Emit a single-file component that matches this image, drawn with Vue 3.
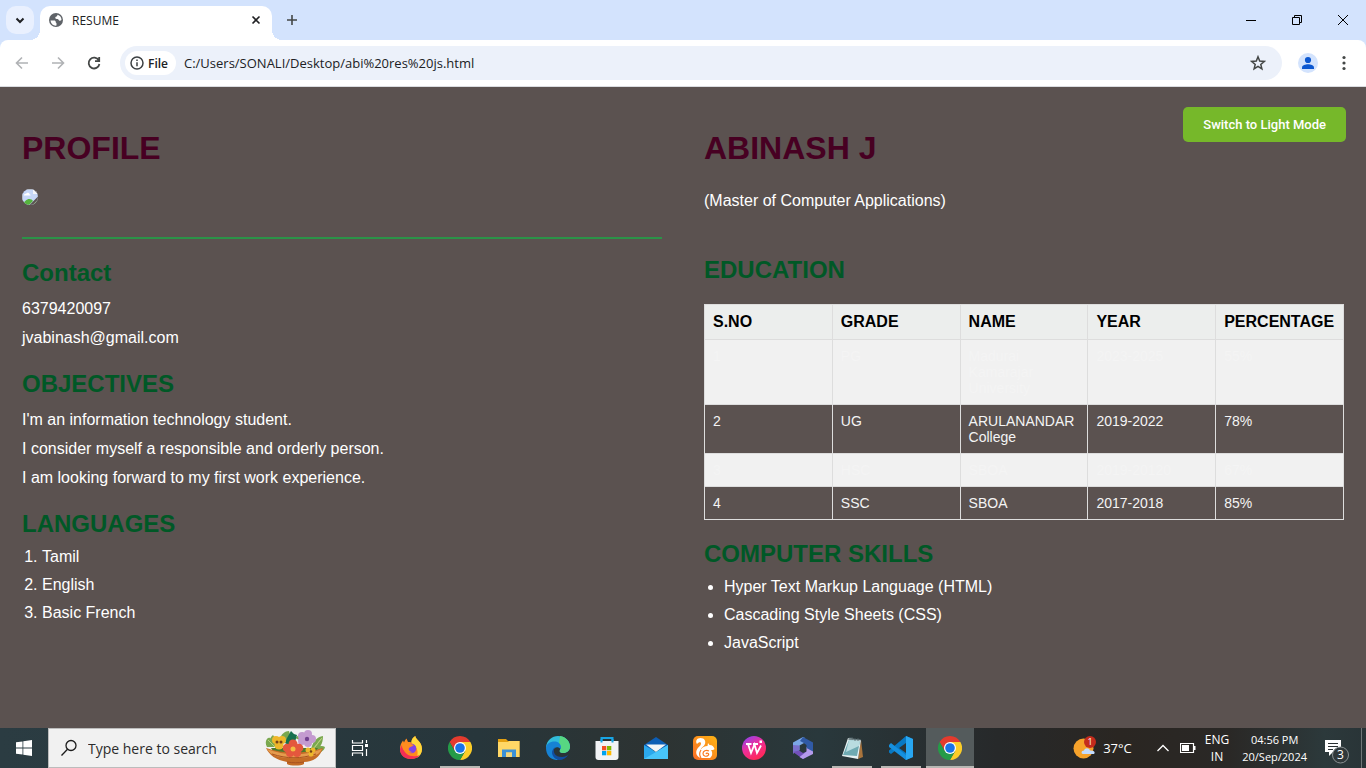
<script setup>
import { ref } from 'vue'

const url = ref('C:/Users/SONALI/Desktop/abi%20res%20js.html')
const columns = ['S.NO', 'GRADE', 'NAME', 'YEAR', 'PERCENTAGE']
const education = [
  ['1', 'PG', 'Madurai Kamarajar University', '2023-2025', '55%'],
  ['2', 'UG', 'ARULANANDAR College', '2019-2022', '78%'],
  ['3', 'HSC', 'SBOA', '2019-20120', '67%'],
  ['4', 'SSC', 'SBOA', '2017-2018', '85%'],
]
const objectives = [
  "I'm an information technology student.",
  'I consider myself a responsible and orderly person.',
  'I am looking forward to my first work experience.',
]
const languages = ['Tamil', 'English', 'Basic French']
const skills = ['Hyper Text Markup Language (HTML)', 'Cascading Style Sheets (CSS)', 'JavaScript']
const apps = [
  { id: 'firefox', name: 'Firefox' },
  { id: 'chrome', name: 'Chrome', open: true },
  { id: 'explorer', name: 'File Explorer' },
  { id: 'edge', name: 'Edge' },
  { id: 'store', name: 'Store' },
  { id: 'mail', name: 'Mail' },
  { id: 'uc', name: 'UC Browser' },
  { id: 'wps', name: 'WPS Office' },
  { id: 'm365', name: 'Microsoft 365' },
  { id: 'notepad', name: 'Notepad', open: true },
  { id: 'code', name: 'Visual Studio Code', open: true },
  { id: 'chrome', name: 'Chrome window', active: true },
]
</script>

<template>
  <div class="screen">
    <div class="browser">
      <header class="tabstrip">
        <button class="tab-search icon-btn" aria-label="Search tabs">
          <svg width="28" height="28" viewBox="0 0 28 28"><path d="M10.5 12.5l3.5 3.5 3.5-3.5" fill="none" stroke="#202124" stroke-width="2" /></svg>
        </button>
        <div class="tab">
          <svg width="16" height="16" viewBox="0 0 16 16">
            <circle cx="8" cy="8" r="7" fill="#5f6368" />
            <path d="M2.500 8.500h3.600c1.200 0 1.600.6 1.600 1.400 0 .7.8.6.8 1.500v2.200c-3.400.3-5.700-1.800-6-5.100zM9.500 2.700c2.400.5 4 2.500 4 5.300-.8.700-1.700.9-2.400.4-.8-.7-.5-1.500-1.500-1.500-1.200 0-2.300-.1-2.300-1.200 0-1.300 1.900-.7 2.200-3z" fill="#fff" />
          </svg>
          <span class="tab-title">RESUME</span>
          <button class="icon-btn" aria-label="Close tab">
            <svg width="16" height="16" viewBox="0 0 16 16"><path d="M4.500 4.500l7 7m0-7l-7 7" stroke="#202124" stroke-width="1.600" /></svg>
          </button>
        </div>
        <button class="new-tab icon-btn" aria-label="New tab">
          <svg width="20" height="20" viewBox="0 0 20 20"><path d="M10 5v10M5 10h10" stroke="#444746" stroke-width="1.600" /></svg>
        </button>
        <div class="window-controls">
          <button class="icon-btn" aria-label="Minimize"><svg width="12" height="12" viewBox="0 0 12 12"><path d="M1 6.500h10" stroke="#000" /></svg></button>
          <button class="icon-btn" aria-label="Restore"><svg width="12" height="12" viewBox="0 0 12 12"><path d="M1.500 3.500h7v7h-7zM3.500 3.500v-2h7v7h-2" fill="none" stroke="#000" /></svg></button>
          <button class="icon-btn" aria-label="Close"><svg width="12" height="12" viewBox="0 0 12 12"><path d="M1 1l10 10M11 1L1 11" stroke="#000" /></svg></button>
        </div>
      </header>

      <nav class="toolbar">
        <button class="icon-btn nav-btn" aria-label="Back">
          <svg width="16" height="16" viewBox="0 0 16 16"><path d="M14 8H3M8 2.500L2.500 8 8 13.500" fill="none" stroke="#b0b2b5" stroke-width="1.600" /></svg>
        </button>
        <button class="icon-btn nav-btn" aria-label="Forward">
          <svg width="16" height="16" viewBox="0 0 16 16"><path d="M2 8h11M8 2.500l5.500 5.500L8 13.500" fill="none" stroke="#b0b2b5" stroke-width="1.600" /></svg>
        </button>
        <button class="icon-btn reload" aria-label="Reload">
          <svg width="16" height="16" viewBox="0 0 16 16"><path d="M12.800 5.400A5.400 5.400 0 1 0 13.400 9M13.200 2v4.200H9" fill="none" stroke="#444746" stroke-width="1.800" /></svg>
        </button>
        <div class="address">
          <button class="file-chip">
            <svg width="14" height="14" viewBox="0 0 14 14"><circle cx="7" cy="7" r="6" fill="none" stroke="#3c4043" stroke-width="1.500" /><path d="M7 6.200v4M7 3.600v1.500" stroke="#3c4043" stroke-width="1.500" /></svg>
            File
          </button>
          <input v-model="url" class="url" type="text" aria-label="Address" />
          <button class="icon-btn" aria-label="Bookmark this page">
            <svg width="16" height="16" viewBox="0 0 16 16"><path d="M8 1.800l1.700 4.300 4.600.3-3.500 3 1.100 4.500L8 11.400l-3.900 2.500 1.100-4.500-3.500-3 4.600-.3z" fill="none" stroke="#444746" stroke-width="1.500" /></svg>
          </button>
        </div>
        <button class="icon-btn" aria-label="Profile">
          <svg width="20" height="20" viewBox="0 0 20 20"><circle cx="10" cy="10" r="10" fill="#d3e3fd" /><circle cx="10" cy="7" r="3.100" fill="#0b57d0" /><path d="M4 16v-1.500c0-2.200 3.500-3.200 6-3.200s6 1 6 3.200V16z" fill="#0b57d0" /></svg>
        </button>
        <button class="icon-btn menu-btn" aria-label="Menu">
          <svg width="16" height="16" viewBox="0 0 16 16" fill="#444746"><circle cx="8" cy="2.500" r="1.600" /><circle cx="8" cy="8" r="1.600" /><circle cx="8" cy="13.500" r="1.600" /></svg>
        </button>
      </nav>
    </div>

    <main class="page">
      <button class="mode">Switch to Light Mode</button>
      <section>
        <h1>PROFILE</h1>
        <svg width="16" height="16" viewBox="0 0 16 16" role="img" aria-label="Photo">
          <defs><clipPath id="round"><circle cx="8" cy="8" r="8" /></clipPath></defs>
          <g clip-path="url(#round)">
            <rect width="16" height="16" fill="#c6d7f8" />
            <path d="M.5 16V.5H11" fill="none" stroke="#b4bac4" />
            <path d="M2 6.500c0-1.500 1.200-2 2-1.500.6-2 3.500-1.500 3.500.2 1 0 1.200.8 1 1.300z" fill="#fff" />
            <path d="M1 16c1-3.500 3.500-6 6.500-6 1.500 0 2.800.8 3.500 2L7 16z" fill="#56b33d" />
            <path d="M11 0v5h5V0z" fill="#f4f6fa" /><path d="M11 0l5 5V0z" fill="#5b5250" />
            <path d="M16 7.500L7.500 16H16z" fill="#5b5250" />
            <path d="M16 10.500L10.500 16h2.500l3-3z" fill="#9cbf94" />
          </g>
        </svg>
        <hr />
        <h2>Contact</h2>
        <p>6379420097</p>
        <p>jvabinash@gmail.com</p>
        <h2>OBJECTIVES</h2>
        <p v-for="line in objectives" :key="line">{{ line }}</p>
        <h2>LANGUAGES</h2>
        <ol>
          <li v-for="item in languages" :key="item">{{ item }}</li>
        </ol>
      </section>
      <section>
        <h1>ABINASH J</h1>
        <p class="degree">(Master of Computer Applications)</p>
        <h2>EDUCATION</h2>
        <table>
          <thead>
            <tr><th v-for="c in columns" :key="c" scope="col">{{ c }}</th></tr>
          </thead>
          <tbody>
            <tr v-for="row in education" :key="row[0]"><td v-for="(cell, i) in row" :key="i">{{ cell }}</td></tr>
          </tbody>
        </table>
        <h2>COMPUTER SKILLS</h2>
        <ul>
          <li v-for="item in skills" :key="item">{{ item }}</li>
        </ul>
      </section>
    </main>

    <footer class="taskbar">
      <button class="start" aria-label="Start">
        <svg width="16" height="16" viewBox="0 0 16 16" fill="#fff"><path d="M0 2.300l6.500-.9v6.100H0zM7.300 1.300L16 0v7.500H7.300zM0 8.400h6.500v6.200L0 13.700zM7.300 8.400H16V16l-8.700-1.200z" /></svg>
      </button>
      <div class="search">
        <svg width="18" height="18" viewBox="0 0 18 18"><circle cx="11" cy="6.500" r="5" fill="none" stroke="#1c1c1c" stroke-width="1.300" /><path d="M7.500 10.200L1.500 16.500" stroke="#1c1c1c" stroke-width="1.300" /></svg>
        <input type="search" placeholder="Type here to search" aria-label="Type here to search" />
        <svg width="60" height="38" viewBox="0 0 60 38">
          <path d="M2 18C-1 13 2 8 5 9l7 9zM8 18c-4-5-4-9 0-12l8 12zM46 20c2-8 6-12 12-13 0 8-3 13-10 15zM50 20c3-3 7-4 10-2-1 5-6 6-11 6zM30 9l8-6 1 10zM15 10c1-5 5-8 9-8l4 13z" fill="#7aa84f" />
          <path d="M22 9l4-7 3 3 3 1-2 7-5 4-5-3z" fill="#17704e" />
          <path d="M3 11l9 9M57 9l-9 11M50 18l6-8" fill="none" stroke="#b4cf7c" />
          <path d="M6 19h47l-4 6H10z" fill="#4d7a2c" />
          <path d="M1 19c18 6 38 6 57 0-3 9-10 14-19 14v2c-3 2-14 2-17 0v-2C11 31 4 26 1 19z" fill="#c46c27" />
          <path d="M2 20c18 7 38 7 55 0-2 4-5 6-9 7-13 3-27 3-37 0-5-2-7-4-9-7z" fill="#e59b4d" />
          <path d="M7 25c15 5 29 5 44 0M22 33c6 1 11 1 17 0" fill="none" stroke="#a95220" />
          <g fill="#eeb72b"><circle cx="11" cy="11" r="4" /><circle cx="17" cy="11" r="4" /><circle cx="14" cy="16" r="4.500" /><circle cx="43" cy="21" r="2.500" /><circle cx="48" cy="21" r="2.500" /><circle cx="46" cy="25" r="2.500" /></g>
          <g fill="#744019"><circle cx="12" cy="13" r="1.500" /><circle cx="16" cy="13" r="1.500" /><circle cx="46" cy="22.500" r="1.200" /></g>
          <g fill="#c49bd0"><circle cx="37" cy="7" r="4" /><circle cx="43" cy="5" r="4" /><circle cx="47" cy="10" r="4" /><circle cx="43" cy="14" r="4" /><circle cx="37" cy="12" r="4" /></g><circle cx="42" cy="10" r="2.200" fill="#72418f" />
          <g fill="#e4573d"><circle cx="28" cy="15" r="4.500" /><circle cx="34" cy="19" r="4.300" /><circle cx="32" cy="24" r="4" /><circle cx="25" cy="24" r="4" /><circle cx="22" cy="19" r="4.300" /></g><circle cx="28" cy="20" r="2.500" fill="#f3bc42" />
        </svg>
      </div>
      <button class="task-view" aria-label="Task view">
        <svg width="18" height="18" viewBox="0 0 18 18"><path d="M1.500 1v3h10V1M1.500 17v-3h10v3M1.500 6.500h10v5h-10zM15.500 1v3M15.500 10v7" fill="none" stroke="#fff" stroke-width="1.200" /><path d="M14 5h3v3h-3z" fill="#fff" /></svg>
      </button>
      <div class="apps">
        <button v-for="app in apps" :key="app.name" :aria-label="app.name" :class="{ open: app.open, active: app.active }">
          <svg width="24" height="24" viewBox="0 0 24 24">
            <template v-if="app.id === 'firefox'">
              <path d="M12 23C6 23 1 18.800 1 13c0-3.500 1-5.800 3-8.500l1 2C6 4 6.500 3.500 7.500 2.500L9 6c1.500-.3 3 0 3.500.4C12.500 3 14.500 1 16.300 0c.2 3.500 6.700 5.500 6.700 13 0 5.500-5 10-11 10z" fill="#ff8a1f" />
              <path d="M16.300 0c.2 3.500 6.700 5.500 6.700 13 0 4-2 7-5 8.800 1-5 1-8.500-2-11.500-2-2-3-3-3.700-4C12.500 3 14.500 1 16.300 0z" fill="#ffd83b" />
              <path d="M1 13c0 6 4.400 10 11 10 4 0 7-1.500 8.800-4C15 21.500 5 21 3 9z" fill="#f62e55" />
              <circle cx="12.500" cy="12.500" r="4.800" fill="#8043e8" />
              <path d="M3 9c3-3 6-2 9-1l3 1c-2 2-4 1.500-5 3-1 2 1 4 4 4-5 2.500-11-1-11-7z" fill="#ff8d1f" />
            </template>
            <template v-else-if="app.id === 'chrome'">
              <path d="M12 0a12 12 0 0 1 10.400 6H12l-5.200 9L1.600 6A12 12 0 0 1 12 0z" fill="#e33b2e" />
              <path d="M22.400 6A12 12 0 0 1 12 24l5.200-9L12 6z" fill="#fccd28" />
              <path d="M1.600 6A12 12 0 0 0 12 24l5.200-9H6.800z" fill="#259b48" />
              <circle cx="12" cy="12" r="6" fill="#fff" /><circle cx="12" cy="12" r="4.800" fill="#1a73e8" />
            </template>
            <template v-else-if="app.id === 'explorer'">
              <path d="M1 3h8l2 2h11.500v16H1z" fill="#e4a011" /><path d="M1 6h10l1-1h10.500v16H1z" fill="#ffd766" />
              <path d="M5 21v-7.500h14V21h-4v-4.500H9V21z" fill="#3c91d6" /><path d="M9 16.500h6V21H9z" fill="#f3d67d" />
            </template>
            <template v-else-if="app.id === 'edge'">
              <path d="M0 11C1 4 6 0 12 0c7 0 12 5 12 10.500 0 4-3 6.500-7 6.500-3 0-4-1.500-3-3 2-3-1-7-5.500-7C4.500 7 1 9 0 13z" fill="#31bcda" />
              <path d="M14 0c6 1 10 5.500 10 10.500 0 4-3 6.500-7 6.500-3 0-4-1.500-3-3 1.500-2 1-4-1-6z" fill="#57d782" />
              <path d="M0 12c0-4 4-6.500 8.500-6.500 5 0 7.500 4 6 7.500C12 10 8 11 7 15c-1 4 2 8 6 8.900C5 25 0 19 0 12z" fill="#1682d4" />
              <path d="M9 11c-3 5 0 10 7 10 3 0 5-1 6.500-2.500C20.500 22 17 24 13 24c-6-1-10-8-4-13z" fill="#124d9f" />
            </template>
            <template v-else-if="app.id === 'store'">
              <path d="M6.500 7V2h11v5" fill="none" stroke="#18a5e5" stroke-width="2" /><path d="M.5 5h23v16q0 3-3 3h-17q-3 0-3-3z" fill="#f2f3f5" /><path d="M6.500 6.500V3M17.500 6.500V3" stroke="#18a5e5" stroke-width="2" />
              <path d="M7 10h4.300v4.300H7z" fill="#f25022" /><path d="M12 10h4.300v4.300H12z" fill="#7fba00" /><path d="M7 15h4.300v4.300H7z" fill="#00a4ef" /><path d="M12 15h4.300v4.300H12z" fill="#ffb900" />
            </template>
            <template v-else-if="app.id === 'mail'">
              <path d="M0 9L12 1l12 8v5H0z" fill="#0d5eb5" /><path d="M0 9l12 7 12-7v14H0z" fill="#2ba8ed" /><path d="M2 8.500h20L12 16z" fill="#f3f5f7" /><path d="M0 23L24 9v14z" fill="#48c5fa" />
            </template>
            <template v-else-if="app.id === 'uc'">
              <defs><linearGradient id="uc" x1="1" y1="0" x2="0" y2="1"><stop offset="0" stop-color="#fdb515" /><stop offset="1" stop-color="#fa6a25" /></linearGradient></defs>
              <rect width="24" height="24" rx="5" fill="url(#uc)" />
              <path d="M4 8C2 5 4 2 7.500 2c4 0 5.500 3 4.500 6-1 2.500-4 3.500-4.500 6 2-3 4-4 7-4l.5-3 1.500 2c3 0 4 1.500 5 4-1 1.200-2 1.200-3.500 1 2 3 1.500 6-1 8H8c-4-1-6-5-4-8.500C5 11 8 10 8 7.500 8 6 6 5.500 4 8z" fill="#fff" />
              <path d="M16 15c-3-1.500-6 0-6 2.500S13 21 15 19.500s-1-3.500-2-1.500M8 14c-2 3-2 5 0 8" fill="none" stroke="#fb7a20" stroke-width="1.200" />
            </template>
            <template v-else-if="app.id === 'wps'">
              <defs><linearGradient id="wps" x1="0" y1="0" x2=".6" y2="1"><stop offset="0" stop-color="#7c46ff" /><stop offset=".5" stop-color="#ed2f9b" /><stop offset="1" stop-color="#ff2858" /></linearGradient></defs>
              <circle cx="12" cy="12" r="12" fill="url(#wps)" />
              <path d="M4 8h5.500M6 8l3 9 3.500-8.500L15 17l4-7.500M11 8h5" fill="none" stroke="#fff" stroke-width="1.800" /><path d="M17.500 4.500h2.500V7h-2.500z" fill="#fff" />
            </template>
            <template v-else-if="app.id === 'm365'">
              <path d="M12 1L2 6.500v11l6.500-3.300V9.500L14 6.500V2z" fill="#7ba7e6" />
              <path d="M2 9v8.500L8.500 14V9.500z" fill="#7a70cc" />
              <path d="M2 16l10 7 4-2.500v-5L12 17l-4-2.500z" fill="#7350ba" />
              <path d="M22 12v6l-10 5-3.500-2 7-5.500V11z" fill="#b49aeb" />
              <path d="M12 1l10 5.500v9L15.500 12V9L12 6.500 9 5z" fill="#305aa5" />
            </template>
            <template v-else-if="app.id === 'notepad'">
              <path d="M21 4l2 17-5 2z" fill="#a9743c" /><path d="M8 2l13 2-3 19-16-3z" fill="#e8f1f2" /><path d="M9 4l11 1-3 15-14-1z" fill="#6faab2" /><path d="M9 4l11 1-1 5-13 6z" fill="#b9dce0" /><path d="M8 3l13 1M10 1v3M12 1v3M15 2v3M18 2v3" stroke="#52656a" stroke-width=".800" />
            </template>
            <template v-else>
              <path d="M17 0l7 3v18l-7 3L7 14l-5 4-2-1.500v-2L17 0z" fill="#0879c4" /><path d="M0 9l2-2 15 12v5L0 11z" fill="#1690df" /><path d="M17 0l7 3v18l-7 3z" fill="#28a7f2" /><path d="M17 7v10l-7-5z" fill="#2c3436" />
            </template>
          </svg>
        </button>
      </div>
      <div class="tray">
        <button class="weather">
          <svg width="24" height="24" viewBox="0 0 24 24"><circle cx="10.500" cy="12.500" r="10" fill="#f6a22b" /><path d="M10 18c-2 0-2-3.500 1-3.500 1-3 5-3 6 0 5-.5 6 3.500 3 3.500H10z" fill="#c4dcff" /><circle cx="17" cy="6" r="6" fill="#c42b1c" /><text x="17" y="9" text-anchor="middle" class="badge">1</text></svg>
          37°C
        </button>
        <button class="chevron" aria-label="Hidden icons"><svg width="14" height="14" viewBox="0 0 14 14"><path d="M1.500 10L7 4.500l5.500 5.500" fill="none" stroke="#fff" stroke-width="1.300" /></svg></button>
        <button class="battery" aria-label="Battery"><svg width="16" height="12" viewBox="0 0 16 12"><path d="M.5 1.500h13v9H.5z" fill="none" stroke="#fff" stroke-width="1.200" /><path d="M2 3h7v6H2zM14 4h1.500v4H14z" fill="#fff" /></svg></button>
        <button class="lang">ENG<br />IN</button>
        <button class="clock">04:56 PM<br />20/Sep/2024</button>
        <button class="notice" aria-label="Notifications, 3">
          <svg width="26" height="26" viewBox="0 0 26 26"><path d="M1 2h16v12H9l-4 4v-4H1z" fill="#fff" /><path d="M4 5.500h10M4 8.500h10M4 11.500h5" stroke="#2b3133" /><circle cx="16.500" cy="17" r="8" fill="#30383a" stroke="#8a9193" /><text x="16.500" y="21" text-anchor="middle" class="count">3</text></svg>
        </button>
      </div>
    </footer>
  </div>
</template>

<style>
body {
  margin: 0;
}
</style>

<style scoped>
* {
  box-sizing: border-box;
}
.screen {
  display: flex;
  flex-direction: column;
  min-height: 100vh;
  font-family: "Open Sans", "Noto Sans", sans-serif;
}
button {
  border: 0;
  padding: 0;
  background: none;
  font-family: inherit;
  color: inherit;
}
svg {
  display: block;
  flex: none;
}
input {
  flex: 1;
  min-width: 0;
  border: 0;
  padding: 0;
  outline: 0;
  background: transparent;
  font-family: inherit;
}
.icon-btn {
  display: flex;
  align-items: center;
  justify-content: center;
}
.browser {
  background: #d3e3fd;
}
.tabstrip {
  display: flex;
  align-items: center;
  height: 40px;
  padding-left: 6px;
}
.tab-search {
  width: 28px;
  height: 28px;
  border-radius: 10px;
  background: #e9f0fe;
}
.tab {
  position: relative;
  align-self: flex-end;
  display: flex;
  align-items: center;
  gap: 8px;
  width: 232px;
  height: 34px;
  margin-left: 6px;
  padding: 0 8px 6px;
  border-radius: 10px 10px 0 0;
  background: #fff;
}
.tab::before,
.tab::after {
  content: "";
  position: absolute;
  bottom: 0;
  width: 10px;
  height: 10px;
}
.tab::before {
  right: 100%;
  background: radial-gradient(circle at 0 0, transparent 10px, #fff 10px);
}
.tab::after {
  left: 100%;
  background: radial-gradient(circle at 100% 0, transparent 10px, #fff 10px);
}
.tab-title {
  flex: 1;
  font-size: 12px;
  color: #202124;
}
.new-tab {
  margin-left: 10px;
}
.window-controls {
  display: flex;
  margin-left: auto;
}
.window-controls button {
  width: 46px;
  height: 40px;
}
.toolbar {
  display: flex;
  align-items: center;
  height: 47px;
  padding: 0 14px;
  border-bottom: 1px solid #dadce0;
  border-radius: 8px 8px 0 0;
  background: #fff;
}
.nav-btn {
  margin-right: 20px;
}
.reload {
  margin-right: 18px;
}
.address {
  flex: 1;
  display: flex;
  align-items: center;
  height: 34px;
  margin-right: 16px;
  padding: 0 16px 0 5px;
  border-radius: 17px;
  background: #ecf1fa;
}
.file-chip {
  display: flex;
  align-items: center;
  gap: 4px;
  height: 24px;
  margin-right: 8px;
  padding: 0 8px 0 5px;
  border-radius: 12px;
  background: #fff;
  font-size: 12px;
  font-weight: 600;
  color: #202124;
}
.url {
  font-size: 13px;
  color: #202124;
}
.menu-btn {
  margin-left: 18px;
}
.page {
  position: relative;
  flex: 1;
  display: grid;
  grid-template-columns: 1fr 1fr;
  align-items: start;
  gap: 42px;
  padding: 43px 22px;
  background: #5b5250;
  font-family: "Liberation Sans", Arial, sans-serif;
  font-size: 16px;
  line-height: 18px;
  color: #fff;
}
.mode {
  position: absolute;
  top: 20px;
  right: 20px;
  padding: 10px 20px;
  border-radius: 5px;
  background: #76b82a;
  font-family: Roboto, sans-serif;
  font-size: 13px;
  font-weight: 500;
  line-height: 15px;
  color: #fff;
}
h1 {
  margin: 0 0 23px;
  font-size: 32px;
  line-height: 36px;
  color: #470022;
}
h2 {
  margin: 23px 0 14px;
  font-size: 24px;
  line-height: 27px;
  color: #005826;
}
p {
  margin: 0 0 11px;
}
hr {
  height: 2px;
  margin: 32px 0 20px;
  border: 0;
  background: #2b9348;
}
hr + h2 {
  margin-top: 20px;
}
.degree {
  margin: 26px 0 46px;
}
.degree + h2 {
  margin-bottom: 21px;
}
ol,
ul {
  margin: -3px 0 0;
  padding-left: 20px;
}
li {
  margin-bottom: 10px;
}
table {
  width: 100%;
  table-layout: fixed;
  border-collapse: collapse;
}
table + h2 {
  margin-top: 20px;
}
th,
td {
  padding: 8px;
  border: 1px solid #ddd;
  text-align: left;
  vertical-align: top;
}
th {
  background: #eceeed;
  color: #000;
}
td {
  font-size: 14px;
  line-height: 16px;
  color: #f4f4f4;
}
tbody tr:nth-child(odd) {
  background: #f1f1f1;
}
.taskbar {
  display: flex;
  height: 40px;
  background: linear-gradient(90deg, #2b3c42 0%, #27363b 35%, #2d3332 48%, #29383c 60%, #27292a 73%, #2a2622 82%, #2a2826 90%, #2c393b 97%, #293437 100%);
  color: #fff;
}
.taskbar button {
  display: flex;
  align-items: center;
  justify-content: center;
}
.start,
.task-view {
  width: 48px;
}
.search {
  display: flex;
  align-items: center;
  width: 288px;
  padding: 0 10px 0 11px;
  border: 1px solid #bcbcbc;
  background: #f1f1f1;
}
.search input {
  margin-left: 10px;
  font-size: 14px;
}
.search input::placeholder {
  color: #2c2c2c;
  opacity: 1;
}
.apps {
  display: flex;
  gap: 1px;
  margin-left: 3px;
}
.apps button {
  position: relative;
  width: 48px;
}
.apps .open::after,
.apps .active::after {
  content: "";
  position: absolute;
  bottom: 0;
  left: 4px;
  right: 4px;
  height: 2px;
  background: #b8b8b4;
}
.apps .active {
  background: #545b5c;
}
.apps .active::after {
  left: 0;
  right: 0;
}
.tray {
  display: flex;
  margin: 0 4px 0 auto;
  padding-right: 11px;
  border-right: 1px solid #6f7778;
}
.taskbar .weather {
  gap: 6px;
  margin-right: 24px;
  font-size: 13px;
}
.chevron {
  margin-right: 10px;
}
.battery {
  margin-right: 9px;
}
.lang,
.clock {
  font-size: 12px;
  line-height: 17px;
  text-align: center;
}
.clock {
  margin: 0 17px 0 13px;
  font-size: 11px;
}
.taskbar .notice {
  padding-top: 6px;
}
.badge {
  font-size: 9px;
  fill: #fff;
}
.count {
  font-size: 12px;
  fill: #fff;
}
</style>
